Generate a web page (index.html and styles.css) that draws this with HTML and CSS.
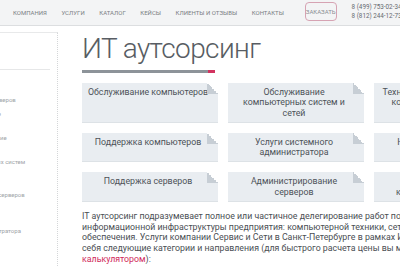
FILE: index.html
```html
<!DOCTYPE html>
<html lang="ru">
<head>
<meta charset="utf-8">
<title>ИТ аутсорсинг</title>
<link rel="stylesheet" href="styles.css">
</head>
<body>
<header class="top">
  <nav class="nav">
    <a class="nav-link">Компания</a>
    <a class="nav-link">Услуги</a>
    <a class="nav-link">Каталог</a>
    <a class="nav-link">Кейсы</a>
    <a class="nav-link">Клиенты и отзывы</a>
    <a class="nav-link">Контакты</a>
  </nav>
  <a class="order">Заказать</a>
  <div class="phones">
    <div>8 (499) 753-02-34</div>
    <div>8 (812) 244-12-73</div>
  </div>
</header>
<div class="page">
  <aside class="side">
    <div class="side-head"></div>
    <ul class="side-menu">
      <li class="side-item">Обслуживание офисных серверов<br>Удаленное ИТ-обслуживание</li>
      <li class="side-item">Абонентское ИТ-обслуживание</li>
      <li class="side-item">Поддержка информационных систем</li>
      <li class="side-item far">Обслуживание и настройка серверов</li>
      <li class="side-item farther">Услуги системного администратора</li>
    </ul>
  </aside>
  <main class="main">
    <h1 class="title">ИТ аутсорсинг</h1>
    <div class="title-bar"></div>
    <div class="cards">
      <div class="card">Обслуживание компьютеров</div>
      <div class="card">Обслуживание компьютерных систем и сетей</div>
      <div class="card">Техническое обслуживание компьютерной техники</div>
      <div class="card">Поддержка компьютеров</div>
      <div class="card">Услуги системного администратора</div>
      <div class="card">Настройка серверов</div>
      <div class="card">Поддержка серверов</div>
      <div class="card">Администрирование серверов</div>
      <div class="card">Обслуживание компьютерных сетей</div>
    </div>
    <p class="text">IT аутсорсинг подразумевает полное или частичное делегирование работ по обслуживанию<br>информационной инфраструктуры предприятия: компьютерной техники, сетей и программного<br>обеспечения. Услуги компании Сервис и Сети в Санкт-Петербурге в рамках ИТ аутсорсинга включают в<br>себя следующие категории и направления (для быстрого расчета цены вы можете воспользоваться<br><a class="link">калькулятором</a>):</p>
  </main>
</div>
</body>
</html>
```
FILE: styles.css
```css
* { box-sizing: border-box; }
html, body { margin: 0; padding: 0; }
body {
  width: 400px;
  height: 266px;
  overflow: hidden;
  background: #fff;
  font-family: Roboto, "Noto Sans", Arial, sans-serif;
  color: #444;
}
.top {
  height: 26px;
  background: #f3f4f5;
  border-bottom: 1px solid #dcdee0;
  display: flex;
  align-items: center;
  padding-left: 13px;
  white-space: nowrap;
}
.nav { display: flex; gap: 14.5px; }
.nav-link {
  font-size: 6px;
  text-transform: uppercase;
  color: #7b7f84;
  letter-spacing: 0.02px;
}
.order {
  margin-left: 21px;
  margin-top: -2px;
  height: 19px;
  width: 42px;
  border: 1px solid #d6a3b3;
  border-radius: 4px;
  font-size: 6px;
  text-transform: uppercase;
  color: #8a8e93;
  display: flex;
  align-items: center;
  justify-content: center;
}
.phones {
  margin-left: 15px;
  font-size: 6.3px;
  line-height: 9px;
  color: #666a70;
  margin-top: -1px;
}
.page {
  display: flex;
  align-items: stretch;
  height: 240px;
  padding-top: 6px;
}
.side {
  flex: 0 0 191px;
  margin-left: -133px;
  border-top: 1px solid #e8e9ea;
  border-right: 1px dotted #d4d6d8;
}
.side-head {
  height: 37px;
  margin-right: 7px;
  border-bottom: 1px solid #e6e7e8;
}
.side-menu {
  list-style: none;
  margin: 0;
  padding: 18px 0 0 52px;
}
.side-item {
  font-size: 6px;
  line-height: 14px;
  color: #a0a4a8;
  white-space: nowrap;
  padding: 5px 0;
}
.side-item.far { padding-top: 14px; }
.side-item.farther { padding-top: 17px; }
.main {
  flex: 0 0 560px;
  padding-left: 24px;
}
.title {
  margin: 0;
  font-size: 28px;
  line-height: 33px;
  font-weight: 300;
  color: #585d63;
  letter-spacing: -0.6px;
}
.title-bar {
  margin-top: 5px;
  width: 133px;
  height: 3px;
  background: linear-gradient(to right, #8d9399 0, #8d9399 126px, #d2335f 126px);
}
.cards {
  margin-top: 10px;
  display: grid;
  grid-template-columns: repeat(3, 136px);
  gap: 10px 10px;
}
.card {
  position: relative;
  background: #e9edf1;
  border-bottom: 1px solid #dde2e6;
  padding: 4px 8px 4px 4px;
  font-size: 8.8px;
  line-height: 10.3px;
  text-align: center;
  color: #4d5258;
}
.card::after {
  content: "";
  position: absolute;
  top: 0;
  right: 0;
  width: 11px;
  height: 11px;
  background: linear-gradient(to left bottom, #fff 50%, #c7ced5 50%);
}
.text {
  margin: 9px 0 0;
  font-size: 8.8px;
  line-height: 10.7px;
  color: #4a4e53;
  white-space: nowrap;
}
.link { color: #d0285a; }
```
